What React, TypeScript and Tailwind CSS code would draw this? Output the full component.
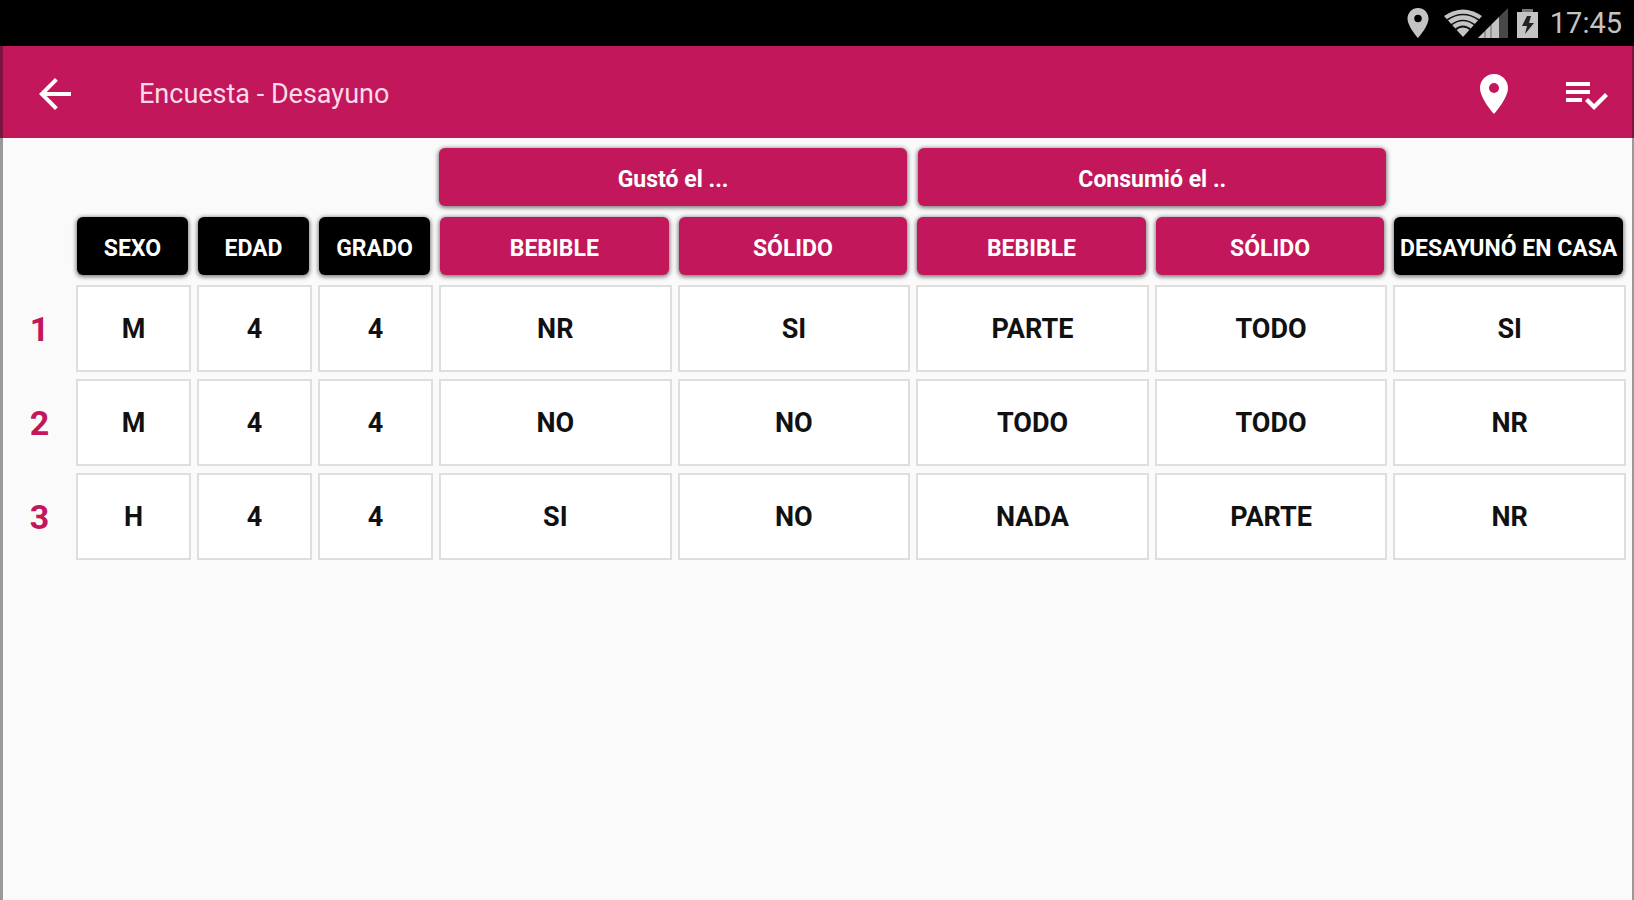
import type { ReactNode } from "react";

const answers = [
  ["M", "4", "4", "NR", "SI", "PARTE", "TODO", "SI"],
  ["M", "4", "4", "NO", "NO", "TODO", "TODO", "NR"],
  ["H", "4", "4", "SI", "NO", "NADA", "PARTE", "NR"],
];

const columns = [
  { label: "SEXO", pink: false },
  { label: "EDAD", pink: false },
  { label: "GRADO", pink: false },
  { label: "BEBIBLE", pink: true },
  { label: "SÓLIDO", pink: true },
  { label: "BEBIBLE", pink: true },
  { label: "SÓLIDO", pink: true },
  { label: "DESAYUNÓ EN CASA", pink: false },
];

const PLACE_PATH =
  "M12 2C8.13 2 5 5.13 5 9c0 5.25 7 13 7 13s7-7.75 7-13c0-3.87-3.13-7-7-7zm0 9.5a2.5 2.5 0 0 1 0-5 2.5 2.5 0 0 1 0 5z";

function Icon({ path, className }: { path: string; className: string }) {
  return (
    <svg viewBox="0 0 24 24" fill="currentColor" className={className} aria-hidden="true">
      <path d={path} />
    </svg>
  );
}

function StatusBar() {
  return (
    <div className="flex h-[46px] items-center justify-end bg-black pr-3 text-[#c4c4c4]">
      <Icon path={PLACE_PATH} className="mr-2 size-9" />

      {/* Wifi */}
      <svg viewBox="0 0 38 28" className="h-7 w-[38px]" aria-hidden="true">
        <path d="M0 7Q19 -6 38 7L19 28z" fill="currentColor" />
        <g fill="none" stroke="#111" strokeWidth="1.7">
          <path d="M3 11Q19 0 35 11" />
          <path d="M7 16Q19 7 31 16" />
          <path d="M11 21Q19 14 27 21" />
        </g>
      </svg>

      {/* Mobile signal */}
      <svg viewBox="0 0 30 30" className="-ml-1 size-[30px]" aria-hidden="true">
        <path d="M0 30L30 0v30z" fill="#484848" />
        <path d="M0 30L21 9v21z" fill="currentColor" />
        <path d="M7 22v8M13 16v14" stroke="#000" strokeOpacity="0.4" strokeWidth="1.2" />
      </svg>

      {/* Battery charging */}
      <svg viewBox="0 0 21 29" className="ml-[9px] h-[29px] w-[21px]" aria-hidden="true">
        <path d="M5 0h11v3H5z" fill="#777" />
        <path d="M0 3h21v26H0z" fill="currentColor" />
        <path d="M10 7L5 17h5l-2 8 9-11h-5l2-7z" fill="#222" />
      </svg>

      <span className="ml-3 text-[29px] leading-9">17:45</span>
    </div>
  );
}

function AppBar() {
  return (
    <header className="flex h-[92px] items-center border-r-2 border-l-3 border-[#7d1440] bg-[#c2185b] pt-1 pr-[22px] pl-7 text-white">
      <button type="button" aria-label="Volver">
        <Icon
          path="M20 11H7.83l5.59-5.59L12 4l-8 8 8 8 1.41-1.41L7.83 13H20v-2z"
          className="size-12"
        />
      </button>
      <h1 className="ml-[60px] text-[27px] leading-8 text-[#fbdbe7]">Encuesta - Desayuno</h1>
      <div className="ml-auto flex gap-11">
        <button type="button" aria-label="Ubicación">
          <Icon path={PLACE_PATH} className="size-12" />
        </button>
        <button type="button" aria-label="Finalizar encuesta">
          <Icon
            path="M14 10H2v2h12v-2zm0-4H2v2h12V6zM2 16h8v-2H2v2zm19.5-4.5L23 13l-6.99 7-4.51-4.5L13 14l3.01 3 5.49-5.5z"
            className="size-12"
          />
        </button>
      </div>
    </header>
  );
}

function HeadLabel({ pink, children }: { pink: boolean; children: ReactNode }) {
  return (
    <div
      className={`flex h-[58px] items-center justify-center rounded-md pt-1.5 text-[23px] leading-8 font-bold whitespace-nowrap text-white shadow-[0_1px_4px_1px_rgba(0,0,0,0.5)] ${
        pink ? "bg-[#c2185b]" : "bg-black"
      }`}
    >
      {children}
    </div>
  );
}

export default function App() {
  return (
    <div className="flex min-h-screen flex-col bg-[#fafafa] font-[Roboto,sans-serif]">
      <StatusBar />
      <AppBar />

      <main className="grow border-r-2 border-l-3 border-[#999] pt-0.5">
        <table className="w-full table-fixed border-separate border-spacing-x-1.5 border-spacing-y-[7px]">
          <colgroup>
            <col className="w-[61px]" />
            <col className="w-[115px]" />
            <col className="w-[115px]" />
            <col className="w-[115px]" />
            <col span={5} />
          </colgroup>
          <thead>
            <tr>
              <td colSpan={4} />
              <th colSpan={2} scope="colgroup" className="pt-px pr-[3px] pb-[3px] pl-0">
                <HeadLabel pink>Gustó el ...</HeadLabel>
              </th>
              <th colSpan={2} scope="colgroup" className="pt-px pr-px pb-[3px] pl-0.5">
                <HeadLabel pink>Consumió el ..</HeadLabel>
              </th>
              <td />
            </tr>
            <tr>
              <td />
              {columns.map((column, i) => (
                <th key={i} scope="col" className="pt-px pr-[3px] pb-[3px] pl-px">
                  <HeadLabel pink={column.pink}>{column.label}</HeadLabel>
                </th>
              ))}
            </tr>
          </thead>
          <tbody>
            {answers.map((row, i) => (
              <tr key={i} className="h-[87px]">
                <th scope="row" className="p-0 text-center text-[34px] leading-10 font-bold text-[#c2185b]">
                  {i + 1}
                </th>
                {row.map((value, j) => (
                  <td
                    key={j}
                    className="border-2 border-[#dedede] bg-white p-0 text-center text-[27px] leading-8 font-bold text-[#111]"
                  >
                    {value}
                  </td>
                ))}
              </tr>
            ))}
          </tbody>
        </table>
      </main>
    </div>
  );
}
